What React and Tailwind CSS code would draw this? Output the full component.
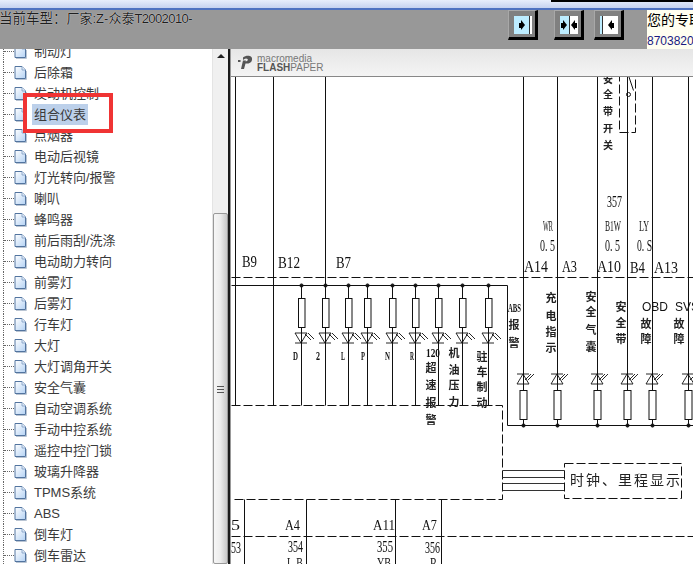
const items = ["制动灯","后除霜","发动机控制","组合仪表","点烟器","电动后视镜","灯光转向/报警","喇叭","蜂鸣器","前后雨刮/洗涤","电动助力转向","前雾灯","后雾灯","行车灯","大灯","大灯调角开关","安全气囊","自动空调系统","手动中控系统","遥控中控门锁","玻璃升降器","TPMS系统","ABS","倒车灯","倒车雷达"];

function DocIcon() {
  return (
    <svg width="13" height="15" viewBox="0 0 13 15" className="shrink-0">
      <defs>
        <linearGradient id="docg" x1="0" y1="0" x2="1" y2="1">
          <stop offset="0" stopColor="#ffffff" />
          <stop offset="1" stopColor="#b4d2f4" />
        </linearGradient>
      </defs>
      <path d="M1 1.5H8L11.5 5V13.5H1Z" fill="url(#docg)" stroke="#52749f" strokeWidth="1" />
      <path d="M8 1.5V5H11.5" fill="#dfeaf8" stroke="#7f9cc2" strokeWidth="0.8" />
      <path d="M2 14.5H12.5V6" fill="none" stroke="#b9c4d2" strokeWidth="1" />
    </svg>
  );
}

function Arrow({ dir }) {
  return dir === "right" ? (
    <span className="flex items-center">
      <span className="w-[2px] h-[5px] bg-black" />
      <span className="w-0 h-0 border-y-[5px] border-y-transparent border-l-[4px] border-l-black" />
    </span>
  ) : (
    <span className="flex items-center">
      <span className="w-0 h-0 border-y-[5px] border-y-transparent border-r-[4px] border-r-black" />
      <span className="w-[2px] h-[5px] bg-black" />
    </span>
  );
}

function PanelBtn({ children, className = "" }) {
  return (
    <div className={`w-[30px] h-[30px] shrink-0 bg-[#808080] border-t border-l border-t-[#a8a8a8] border-l-[#a8a8a8] border-b-[3px] border-r-[3px] border-b-black border-r-black pl-[5px] pt-[5px] pr-[3px] pb-[3px] ${className}`}>
      <div className="flex w-full h-full">{children}</div>
    </div>
  );
}

const TXT = "'Liberation Serif','Noto Sans CJK SC',serif";
const CJK = "'Noto Sans CJK SC',serif";

function L({ x, y, w, s = 13, t, b }) {
  return <text x={x} y={y} fontSize={s} fontFamily={TXT} fontWeight={b ? 700 : 400} textLength={w} lengthAdjust="spacingAndGlyphs" fill="#111">{t}</text>;
}
function V({ x, ys, t, s = 11 }) {
  return t.split("").map((c, i) => (
    <text key={i} x={x} y={ys[i] + s * 0.4} fontSize={s} fontFamily={CJK} fontWeight="700" textAnchor="middle" fill="#222">{c}</text>
  ));
}
function Led({ x, y }) {
  return (
    <g stroke="#111" strokeWidth="0.9" fill="none">
      <path d={`M${x - 6} ${y}H${x + 6}L${x} ${y + 10}Z`} />
      <path d={`M${x - 6} ${y + 10}H${x + 6}`} />
      <path d={`M${x + 4} ${y + 1}l6 6M${x + 7} ${y}l6 6`} />
    </g>
  );
}
function UpLed({ x, y }) {
  return (
    <g stroke="#111" strokeWidth="0.9" fill="none">
      <path d={`M${x - 6} ${y + 10}H${x + 6}L${x} ${y}Z`} />
      <path d={`M${x - 6} ${y}H${x + 6}`} />
      <path d={`M${x + 2} ${y + 6}l6 -6M${x + 5} ${y + 6}l6 -6`} />
    </g>
  );
}

function Diagram() {
  const tops = [301, 325, 348, 367, 392, 415, 438, 462, 488];
  const bottoms = [523, 557, 597, 627, 652, 688];
  const dash = "9 3";
  return (
    <svg viewBox="231 77 462 487" className="w-full h-full blur-[0.2px]" preserveAspectRatio="none">
      <g stroke="#111" strokeWidth="1" fill="none" transform="translate(0.5 0.5)">
        {[235, 273, 325].map((x) => <path key={x} d={`M${x} 72V405`} />)}
        {bottoms.map((x) => <path key={x} d={`M${x} 72V390M${x} 419V425`} />)}
        <path d="M231 277H693" strokeDasharray={dash} />
        <path d="M231 285H507V425H693" />
        <path d="M231 405H502V499H231" strokeDasharray={dash} />
        {[470, 477, 483, 490].map((y) => <path key={y} d={`M502 ${y}H564`} stroke="#333" />)}
        <path d="M564 463H681V498H564Z" strokeDasharray={dash} />
        {[244, 306, 395, 441].map((x) => <path key={x} d={`M${x} 499V564`} />)}
        <path d="M231 536H693" strokeDasharray={dash} />
        <path d="M619 72V132H635V72" strokeDasharray="9 3" />
        <path d="M627 72L633 90M627 96V132" />
        <circle cx="628" cy="94" r="2" />
        {tops.map((x) => (
          <g key={x}>
            <path d={`M${x} 285V298M${x} 327V${x === 325 ? 333 : 405}`} />
            <rect x={x - 3} y="298" width="6.5" height="29" fill="#fff" />
            <circle cx={x} cy="285" r="1.6" fill="#111" />
          </g>
        ))}
        {bottoms.map((x) => (
          <g key={x}>
            <rect x={x - 3.5} y="390" width="7" height="29" fill="#fff" />
            <circle cx={x} cy="425" r="1.6" fill="#111" />
          </g>
        ))}
      </g>
      {tops.map((x) => <Led key={x} x={x} y={333} />)}
      {bottoms.map((x) => <UpLed key={x} x={x} y={374} />)}
      <L x={242} y={267} w={15} t="B9" s={16} />
      <L x={278} y={268} w={22} t="B12" s={16} />
      <L x={336} y={268} w={15} t="B7" s={16} />
      <L x={524} y={272} w={24} t="A14" s={17} />
      <L x={562} y={272} w={15} t="A3" s={17} />
      <L x={597} y={272} w={24} t="A10" s={17} />
      <L x={630} y={273} w={15} t="B4" s={17} />
      <L x={654} y={273} w={24} t="A13" s={17} />
      <L x={293} y={360} w={5} t="D" s={12} b />
      <L x={316} y={360} w={4} t="2" s={12} b />
      <L x={341} y={360} w={4} t="L" s={12} b />
      <L x={361} y={360} w={4} t="P" s={12} b />
      <L x={385} y={360} w={5} t="N" s={12} b />
      <L x={410} y={360} w={4} t="R" s={12} b />
      <L x={426} y={357} w={14} t="120" s={13} b />
      <V x={431} ys={[368, 385, 403, 420]} t="超速报警" />
      <V x={454} ys={[353, 370, 385, 402]} t="机油压力" />
      <V x={482} ys={[357, 372, 387, 403]} t="驻车制动" />
      <L x={508} y={312} w={13} t="ABS" s={12} b />
      <V x={514} ys={[325, 343]} t="报警" />
      <V x={551} ys={[298, 316, 332, 348]} t="充电指示" />
      <V x={591} ys={[297, 312, 330, 347]} t="安全气囊" />
      <V x={621} ys={[307, 323, 339]} t="安全带" />
      <text x={642} y={311} fontSize={12} fontFamily="'Liberation Sans',sans-serif" fill="#111">OBD</text>
      <V x={646} ys={[324, 339]} t="故障" />
      <text x={675} y={311} fontSize={12} fontFamily="'Liberation Sans',sans-serif" fill="#111">SVS</text>
      <V x={679} ys={[324, 339]} t="故障" />
      <V x={608} ys={[79, 94, 111, 128, 145]} t="安全带开关" s={10} />
      <L x={607} y={207} w={15} t="357" s={17} />
      <L x={543} y={231} w={10} t="WR" s={15} />
      <L x={540} y={251} w={15} t="0. 5" s={16} />
      <L x={605} y={231} w={16} t="B1W" s={15} />
      <L x={605} y={251} w={15} t="0. 5" s={16} />
      <L x={639} y={231} w={10} t="LY" s={15} />
      <L x={637} y={251} w={15} t="0. S" s={16} />
      <text x={570} y={485} fontSize={14} fontFamily={TXT} letterSpacing="2" fill="#222">时钟、里程显示</text>
      <L x={231} y={530} w={9} t="5" s={15} />
      <L x={285} y={530} w={15} t="A4" s={15} />
      <L x={373} y={530} w={22} t="A11" s={15} />
      <L x={422} y={530} w={15} t="A7" s={15} />
      <L x={231} y={553} w={10} t="53" s={17} />
      <L x={288} y={552} w={15} t="354" s={16} />
      <L x={377} y={552} w={16} t="355" s={16} />
      <L x={425} y={553} w={15} t="356" s={17} />
      <L x={287} y={568} w={16} t="L-B" s={14} />
      <L x={377} y={568} w={14} t="YB" s={14} />
      <L x={430} y={568} w={7} t="R" s={14} />
    </svg>
  );
}

export default function App() {
  return (
    <div className="relative w-[693px] h-[564px] overflow-hidden bg-white font-['Noto_Sans_CJK_SC',sans-serif]">
      <div className="h-2 flex justify-end bg-gradient-to-b from-[#e8eefb] to-[#c6d2ef]">
        <div className="w-[142px] h-[2px] bg-black" />
      </div>
      <div className="h-[2px] bg-[#4f72c0]" />
      <div className="h-[39px] bg-[#989898] flex items-start">
        <div className="w-[508px] shrink-0 overflow-hidden h-[18px]">
          <div className="-ml-[1px] text-[13px] leading-[18px] whitespace-nowrap text-[#1f1f1f] [text-shadow:0_0_1px_#fff] font-['Liberation_Sans','Noto_Sans_CJK_SC',sans-serif]">
            <span className="text-[13.5px]">当前车型：</span>厂家:Z-众泰<span className="tracking-[-0.6px]">T2002010-</span>
          </div>
        </div>
        <PanelBtn>
          <div className="flex-1 bg-[#bcecff] flex items-center justify-center"><Arrow dir="right" /></div>
          <div className="w-[1px] bg-[#333]" />
          <div className="w-[2px] bg-white" />
        </PanelBtn>
        <PanelBtn className="ml-4">
          <div className="flex-1 bg-[#bcecff] flex items-center justify-center"><Arrow dir="right" /></div>
          <div className="w-[1px] bg-[#333]" />
          <div className="flex-1 bg-white flex items-center justify-center"><Arrow dir="left" /></div>
        </PanelBtn>
        <PanelBtn className="ml-[10px]">
          <div className="w-[2px] bg-[#bcecff]" />
          <div className="w-[1px] bg-[#333]" />
          <div className="flex-1 bg-white flex items-center justify-center"><Arrow dir="left" /></div>
        </PanelBtn>
        <div className="ml-[23px] w-[46px] h-[39px] shrink-0 overflow-hidden bg-[#fffff0] whitespace-nowrap">
          <div className="text-black text-[14px] leading-[18px]">您的专职</div>
          <div className="text-[#1a1a80] mt-[5px] leading-[16px] font-['Liberation_Sans',sans-serif] text-[12px]">87038200</div>
        </div>
      </div>
      <div className="h-[515px] flex">
        <div className="w-[212px] shrink-0 overflow-hidden bg-white">
          <div className="-mt-[8px] ml-[3px]">
            {items.map((t) => (
              <div key={t} className="h-[21px] flex items-center border-l border-dotted border-[#666]">
                <div className="w-[10px] border-t border-dotted border-[#666]" />
                <DocIcon />
                <div className={`ml-[5px] px-[2px] h-[21px] leading-[22px] text-[13px] text-[#3a3a3a] whitespace-nowrap font-['Liberation_Sans','Noto_Sans_CJK_SC',sans-serif] ${t === "组合仪表" ? "bg-[#bcd0ea]" : ""}`}>{t}</div>
              </div>
            ))}
          </div>
        </div>
        <div className="w-4 shrink-0 bg-[#f0f0f0] flex flex-col border-l border-[#e4e4e4]">
          <div className="h-[164px] flex justify-center pt-[5px]">
            <span className="w-0 h-0 border-x-[4px] border-x-transparent border-b-[4px] border-b-[#222]" />
          </div>
          <div className="flex-1 bg-gradient-to-r from-[#f6f6f6] via-[#ececec] to-[#c8c8c8] border border-[#999] rounded-[2px] flex flex-col items-center pt-[172px]">
            <div className="w-[7px] h-[7px] border-y border-[#555] flex items-center"><div className="w-full h-px bg-[#555]" /></div>
          </div>
        </div>
        <div className="w-[2px] shrink-0 bg-[#1a1a1a]" />
        <div className="flex-1 min-w-0 flex flex-col border-l border-[#999]">
          <div className="h-[28px] shrink-0 bg-gradient-to-b from-[#e6e6e6] to-[#f4f4f4] border-b border-[#888] flex items-center pl-[7px]">
            <svg width="15" height="15" viewBox="0 0 15 15">
              <path d="M5 2.5C8 0 15 0 14 5C13.5 8 10 9 7.5 8.5L6 14H3L5 5.5H8L7.5 6.5C10 6.5 11 3.5 8 3.5C7 3.5 6 4 5 5Z" fill="#555" />
              <rect x="0" y="5" width="2.5" height="2" fill="#555" />
            </svg>
            <div className="ml-[4px] flex flex-col font-['Liberation_Sans',sans-serif] text-[#777]">
              <span className="text-[10px] leading-[9px]">macromedia</span>
              <span className="text-[10px] leading-[9px]"><b className="text-[#555]">FLASH</b>PAPER</span>
            </div>
          </div>
          <div className="flex-1 min-h-0 bg-white">
            <Diagram />
          </div>
        </div>
      </div>
      <div className="absolute left-[23px] top-[93px] w-[90px] h-[40px] border-[4px] border-[#f03434]" />
    </div>
  );
}
